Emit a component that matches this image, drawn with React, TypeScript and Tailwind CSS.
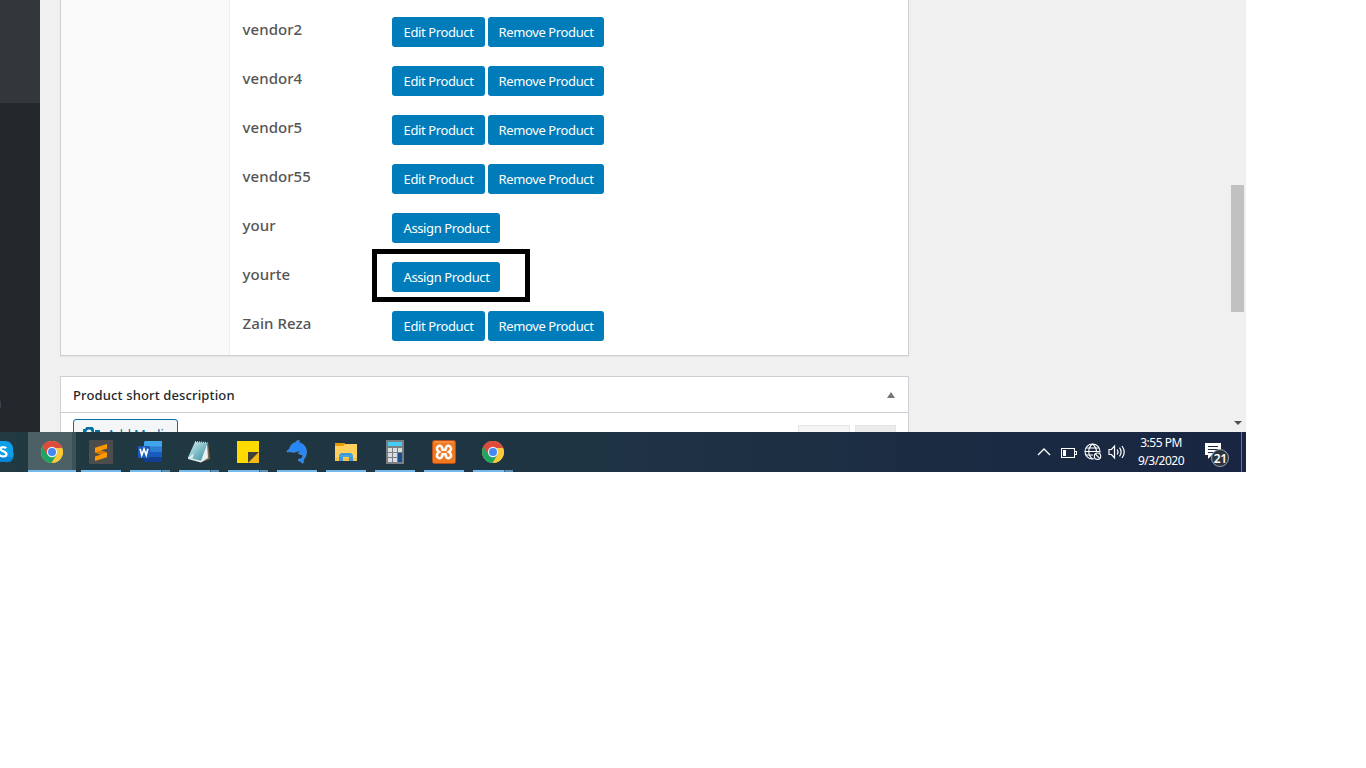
import type { ReactNode } from 'react';

const vendors = [
  { name: 'vendor2', assigned: true },
  { name: 'vendor4', assigned: true },
  { name: 'vendor5', assigned: true },
  { name: 'vendor55', assigned: true },
  { name: 'your', assigned: false },
  { name: 'yourte', assigned: false, marked: true },
  { name: 'Zain Reza', assigned: true },
];

function ActionButton({ children, className }: { children: ReactNode; className: string }) {
  return (
    <button className={`h-[30px] shrink-0 rounded-[3px] bg-[#007cba] text-center text-[13px] leading-[30px] whitespace-nowrap text-white ${className}`}>
      {children}
    </button>
  );
}

function VendorRow({ name, assigned, marked }: { name: string; assigned: boolean; marked?: boolean }) {
  return (
    <div className="relative flex h-[49px] items-start pl-[12px]">
      <span className="-mt-[1px] w-[150px] shrink-0 pl-[0.6px] text-[15px] leading-[26px] font-medium tracking-[0.05px] text-[#555]">{name}</span>
      {assigned ? (
        <div className="flex gap-[3px]">
          <ActionButton className="w-[93px] tracking-[-0.38px]">Edit Product</ActionButton>
          <ActionButton className="w-[116px] tracking-[-0.38px]">Remove Product</ActionButton>
        </div>
      ) : (
        <ActionButton className="w-[108px] pl-px tracking-[-0.38px]">Assign Product</ActionButton>
      )}
      {marked && <div className="absolute top-[-13px] left-[142px] h-[53px] w-[158px] border-5 border-black" />}
    </div>
  );
}

function ChromeIcon() {
  return (
    <svg viewBox="0 0 24 24" className="size-6">
      <circle cx="12" cy="12" r="11" fill="#fbc83a" />
      <path d="M2.47 6.5A11 11 0 0 0 11.6 23L16.8 14.7 12 12Z" fill="#1fa463" />
      <path d="M11.6 23 16.8 14.6 16 9.5 22.7 9.5A11 11 0 0 1 11.6 23Z" fill="#fbc83a" />
      <path d="M2.47 6.5A11 11 0 0 1 22.2 8H12L7.2 14.7Z" fill="#dd4b3e" />
      <circle cx="12" cy="12" r="5.2" fill="#eef1f4" />
      <circle cx="12" cy="12" r="4" fill="#4688f1" />
    </svg>
  );
}

function SublimeIcon() {
  return (
    <svg viewBox="0 0 24 24" className="size-6">
      <rect width="24" height="24" rx="1" fill="#4c4c4c" />
      <path d="M18 4v4.6l-6.2 2L18 12.6v4.6L6 21v-4.6l6-2-6-2V7.8Z" fill="#ff9800" />
      <path d="m6 12.2 6 2.1 6-1.7-6.2-2Z" fill="#d77b00" />
    </svg>
  );
}

function WordIcon() {
  return (
    <svg viewBox="0 0 24 24" className="size-6">
      <path d="M7 1h17v6H6V2Z" fill="#41a5ee" />
      <path d="M6 6.5h18V12H6Z" fill="#2b7cd3" />
      <path d="M6 12h18v5.5H6Z" fill="#185abd" />
      <path d="M6 17.5h18V22H7l-1-1Z" fill="#103f91" />
      <rect y="6" width="12" height="12" rx="1" fill="#1859bb" />
      <path d="m2.1 8.7 1.7 6.5L6 9l2.2 6.2 1.7-6.5" stroke="#fff" strokeWidth="1.7" fill="none" />
    </svg>
  );
}

function NotepadIcon() {
  return (
    <svg viewBox="0 0 24 24" className="size-6">
      <defs>
        <linearGradient id="paper" x1="0" y1="0" x2="1" y2="1">
          <stop stopColor="#e4f5f5" /><stop offset=".5" stopColor="#80bdc8" /><stop offset="1" stopColor="#398b9d" />
        </linearGradient>
      </defs>
      <path d="m21 2 2 17-8 3Z" fill="#766d50" />
      <path d="m20 3 1 15-7 4.5L1 19v-1Z" fill="#e9eeee" />
      <path d="m8 2 12.5 1L14 20.7.8 17.7Z" fill="url(#paper)" />
      <path d="m1 18 6-5-1.5 5.8Z" fill="#d6eeee" />
      <path d="m8 1.8 12.5 1" stroke="#c6dddd" strokeDasharray="1 1" strokeWidth="1.5" />
    </svg>
  );
}

function StickyIcon() {
  return (
    <svg viewBox="0 0 24 24" className="size-6">
      <path d="M1 1h22v11L12 23H1Z" fill="#ffda00" />
      <path d="M12 12h11L12 23Z" fill="#443f36" />
      <path d="M23 12v11H12Z" fill="#f3b916" />
    </svg>
  );
}

function DolphinIcon() {
  return (
    <svg viewBox="0 0 24 24" className="size-6">
      <path d="M2 12c-.3-1.2.8-2 2.5-2.8C5.4 5 7.7 2.9 10.6 2.4 11.3 1.2 12.4.3 14.2.2c-.3 1-.2 1.8.4 2.5 5 1.3 7.4 6.1 6.9 10.6-.3 2.8-1.7 4.8-3 6.4.4 1.4.2 2.5-.9 3.8l-2.3-2.3c-1.1.2-1.8-.2-2.3-1.3 1.2-1.2 2.2-1.3 3.7-1.1.8-1.4 1-2.7.7-4-1.7-.2-3.3-.7-4.5-1.9 1-.4 2-.5 3-.4-.7-1-1.7-1.4-2.9-1.4-1.5.1-2.5 1.3-4 1.2-2.7-.2-4.7-.8-7-.4Z" fill="#2687f8" stroke="#6d9ecb" strokeWidth=".5" />
    </svg>
  );
}

function FolderIcon() {
  return (
    <svg viewBox="0 0 24 24" className="size-6">
      <path d="M1 3h9l1 1h12v17H1Z" fill="#ffd15c" />
      <path d="M1 3h9l1 1-2 2H1Z" fill="#e39b0a" />
      <path d="M1 18h22v2.5H1Z" fill="#f4bf42" />
      <path d="M5 21v-6l2-2h10l2 2v6h-4v-4H9v4Z" fill="#3b99d9" />
      <path d="M5 16h14" stroke="#66b8e9" strokeWidth=".7" />
    </svg>
  );
}

function CalculatorIcon() {
  return (
    <svg viewBox="0 0 24 24" className="size-6">
      <path d="M3 0h18v24H3Z" fill="#7a7f84" />
      <path d="M5 2h14v4H5Z" fill="#45ccf2" />
      <path d="M5 8h4v4H5zm5 0h4v4h-4zm5 0h4v4h-4zM5 13h4v4H5zm5 0h4v4h-4zm-5 5h4v4H5zm5 0h4v4h-4z" fill="#dadddf" />
      <path d="M15 13h4v9h-4Z" fill="#194e91" />
    </svg>
  );
}

function XamppIcon() {
  return (
    <svg viewBox="0 0 24 24" className="size-6">
      <rect x=".5" y=".5" width="23" height="23" rx="2" fill="#ef7820" stroke="#b94f13" />
      <path d="M2 2h20" stroke="#f9a363" />
      <path d="M9.5 9.8h5M9.5 14.2h5M9.8 9.8C11 7 8.3 4.7 6 6.4c-2 1.8-1 4.4 1.2 5.6C5 13.2 4 15.8 6 17.6c2.3 1.7 5-.6 3.8-3.4M14.2 9.8C13 7 15.7 4.7 18 6.4c2 1.8 1 4.4-1.2 5.6 2.2 1.2 3.2 3.8 1.2 5.6-2.3 1.7-5-.6-3.8-3.4" stroke="#fff" strokeWidth="2.5" fill="none" />
    </svg>
  );
}

function Underline({ stacked }: { stacked?: boolean }) {
  return (
    <div className="flex h-[2px] w-full">
      <div className="flex-1 bg-[#76b9ed]" />
      {stacked && <div className="w-[9px] border-l border-[#40647b] bg-[#5b91b8]" />}
    </div>
  );
}

const apps = [
  { id: 'sublime', icon: <SublimeIcon />, stacked: false },
  { id: 'word', icon: <WordIcon />, stacked: true },
  { id: 'notepad', icon: <NotepadIcon />, stacked: true },
  { id: 'notes', icon: <StickyIcon />, stacked: true },
  { id: 'dolphin', icon: <DolphinIcon />, stacked: false },
  { id: 'files', icon: <FolderIcon />, stacked: false },
  { id: 'calculator', icon: <CalculatorIcon />, stacked: false },
  { id: 'xampp', icon: <XamppIcon />, stacked: false },
  { id: 'chrome', icon: <ChromeIcon />, stacked: true },
];

function Taskbar() {
  return (
    <footer className="flex h-10 w-[1246px] items-stretch overflow-hidden bg-linear-to-r from-[#213a41] via-[#1e3343] via-50% to-[#192542] text-white">
      <div className="flex w-7 items-center">
        <svg viewBox="0 0 15 24" className="h-6 w-[15px]">
          <path d="M0 1h5c6 0 9 5 8 10 2 6-1 12-7 11H0Z" fill="#0b9fe8" />
          <path d="M0 17h13c0 3-3 6-7 5H0Z" fill="#0785d4" />
          <path d="M6.2 8.3C5.1 6.9.5 6.5.5 9S6.5 11 6.5 14c0 3-5 3.2-7 1" stroke="#fff" strokeWidth="2.2" fill="none" />
        </svg>
      </div>
      <div className="flex w-12 flex-col bg-linear-to-r from-[#4c6066] from-92% to-[#3d5158] to-92%">
        <div className="flex h-[38px] w-[48px] items-center justify-center pt-[2px]"><ChromeIcon /></div>
        <Underline />
      </div>
      <div className="ml-[5px] flex gap-[9px]">
        {apps.map((app) => (
          <div key={app.id} className="flex w-10 flex-col">
            <div className="flex h-[38px] items-center justify-center pt-[2px]">{app.icon}</div>
            <Underline stacked={app.stacked} />
          </div>
        ))}
      </div>
      <div className="ml-auto flex items-center">
        <svg viewBox="0 0 14 8" className="mr-[10px] h-2 w-[14px]" fill="none" stroke="#fff" strokeWidth="1.3"><path d="m1 7 6-6 6 6" /></svg>
        <svg viewBox="0 0 16 10" className="mt-px mr-[7px] h-[10px] w-4" fill="none" stroke="#fff" shapeRendering="crispEdges">
          <path d="M.5.5h13v9H.5zM14 3.5h1.5v3H14" /><path d="M2 2h3v6H2z" fill="#fff" stroke="none" />
        </svg>
        <svg viewBox="0 0 18 18" className="mr-[6px] size-[18px]" fill="none" stroke="#fff" strokeWidth="1.1">
          <circle cx="8.5" cy="8.5" r="7.5" />
          <path d="M8.5 1c-5 4-5 11 0 15M8.5 1c3 2.4 4 5 4 8M1 8.5h15M2 5h13M2 12h7" />
          <circle cx="13.5" cy="13.2" r="4.3" fill="#1a2945" stroke="none" /><circle cx="13.5" cy="13.2" r="3.2" /><path d="m11.3 11 4.4 4.4" />
        </svg>
        <svg viewBox="0 0 18 16" className="h-4 w-[18px]" fill="none" stroke="#fff" strokeWidth="1.2">
          <path d="M1 5.5h2.5l3-3.5v12l-3-3.5H1zM9 5.5q2 2.5 0 5M11.5 3.7q3.2 4.3 0 8.6M14 2q4.5 6 0 12" />
        </svg>
        <div className="ml-[9px] flex w-[52px] flex-col items-center text-[12px] leading-[18px] tracking-[-0.5px]">
          <span className="whitespace-nowrap">3:55 PM</span><span className="whitespace-nowrap">9/3/2020</span>
        </div>
        <svg viewBox="0 0 28 28" className="mt-[8px] ml-[17px] size-7">
          <path d="M1 1h16v12H8l-4 4v-4H1Z" fill="#fff" />
          <path d="M4 4.5h10M4 7.5h10M4 10.5h8" stroke="#192744" />
          <circle cx="16" cy="16" r="8.5" fill="#2b333d" stroke="#9ba2aa" />
          <text x="16.2" y="20.5" textAnchor="middle" fill="#fff" fontSize="12" letterSpacing="-0.3" fontFamily="Noto Sans, sans-serif" fontWeight="600">21</text>
        </svg>
        <div className="mr-[4px] ml-[9px] h-10 w-px bg-[#68758a]" />
      </div>
    </footer>
  );
}

export default function App() {
  return (
    <div className="h-screen w-full overflow-hidden bg-white font-['Noto_Sans',sans-serif]">
      <div className="flex h-[432px] w-[1246px] overflow-hidden bg-[#f0f0f0]">
        <aside className="w-10 shrink-0 bg-[#23282d]">
          <div className="h-[103px] bg-[#32373c]" />
          <div className="mt-[298px] h-[7px] w-px bg-[#394047]" />
        </aside>
        <main className="ml-5 w-[849px] shrink-0">
          <section className="flex h-[356px] border-x border-b border-[#ccd0d4] bg-white shadow-[0_1px_1px_rgba(0,0,0,0.04)]">
            <div className="w-[169px] shrink-0 border-r border-[#eee] bg-[#fafafa]" />
            <div className="flex-1 pt-[17px]">
              {vendors.map((vendor) => <VendorRow key={vendor.name} {...vendor} />)}
            </div>
          </section>
          <section className="mt-5 h-[56px] overflow-hidden border-x border-t border-[#ccd0d4] bg-white">
            <header className="flex h-9 items-center justify-between border-b border-[#ccd0d4] pr-[13.5px] pl-[12px]">
              <h2 className="pt-[2px] text-[13px] font-medium tracking-[0.14px] text-[#23282d]">Product short description</h2>
              <svg viewBox="0 0 8 6" className="h-[6px] w-2"><path d="m4 0 4 6H0Z" fill="#72777c" /></svg>
            </header>
            <div className="flex items-start justify-between pr-3 pl-3">
              <button className="mt-[6px] flex h-[30px] w-[105px] items-center rounded-[3px] border border-[#0071a1] bg-[#f3f5f6] pt-[2px] pl-[9px] text-[13px] tracking-[-0.2px] whitespace-nowrap text-[#0071a1]">
                <svg viewBox="0 0 18 16" className="mr-[6px] h-4 w-[18px] shrink-0" fill="#0071a1">
                  <path d="M0 2h2l2-3h5l2 3v8H0Z" /><circle cx="6" cy="5" r="2.5" fill="#f3f5f6" /><path d="M12 3h5v8h-2V6h-3Z" />
                </svg>
                Add Media
              </button>
              <div className="mt-3 flex gap-[5px]">
                <div className="h-7 w-[52px] border border-[#e5e5e5] bg-[#f5f5f5]" />
                <div className="h-7 w-[41px] border border-[#e5e5e5] bg-[#ebebeb]" />
              </div>
            </div>
          </section>
        </main>
        <div className="ml-auto flex w-[17px] flex-col items-center bg-[#f0f0f0]">
          <div className="mt-[185px] h-[127px] w-[13px] bg-[#c1c1c1]" />
          <svg viewBox="0 0 8 4" className="mt-[109px] h-1 w-2"><path d="M0 0h8L4 4Z" fill="#505050" /></svg>
        </div>
      </div>
      <Taskbar />
    </div>
  );
}
